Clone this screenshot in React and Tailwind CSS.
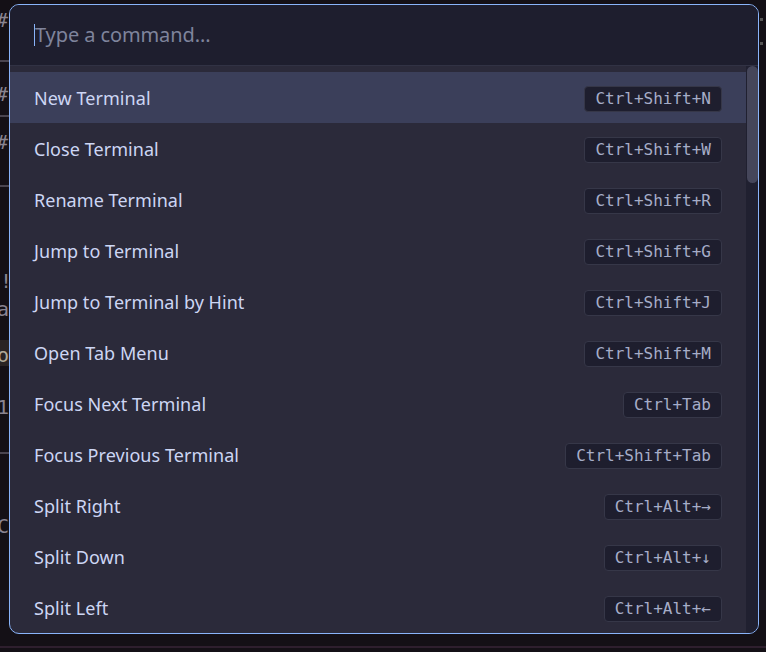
import React from 'react'

const COMMANDS = [
  { label: 'New Terminal', keys: 'Ctrl+Shift+N' },
  { label: 'Close Terminal', keys: 'Ctrl+Shift+W' },
  { label: 'Rename Terminal', keys: 'Ctrl+Shift+R' },
  { label: 'Jump to Terminal', keys: 'Ctrl+Shift+G' },
  { label: 'Jump to Terminal by Hint', keys: 'Ctrl+Shift+J' },
  { label: 'Open Tab Menu', keys: 'Ctrl+Shift+M' },
  { label: 'Focus Next Terminal', keys: 'Ctrl+Tab' },
  { label: 'Focus Previous Terminal', keys: 'Ctrl+Shift+Tab' },
  { label: 'Split Right', keys: 'Ctrl+Alt+→' },
  { label: 'Split Down', keys: 'Ctrl+Alt+↓' },
  { label: 'Split Left', keys: 'Ctrl+Alt+←' },
  { label: 'Split Up', keys: 'Ctrl+Alt+↑' },
]

// fragments of the terminal behind the palette
function Backdrop() {
  return (
    <div className="absolute inset-0 overflow-hidden text-[20px] text-[#8a8490] font-['DejaVu_Sans_Mono',monospace]">
      <span className="absolute left-[-4px] top-[5px]">#</span>
      <span className="absolute left-[-4px] top-[79px]">#</span>
      <span className="absolute left-[-4px] top-[127px]">#</span>
      <div className="absolute left-0 top-[60px] w-[9px] h-[2px] bg-[#4a4550]" />
      <div className="absolute left-0 top-[115px] w-[9px] h-[2px] bg-[#4a4550]" />
      <div className="absolute left-0 top-[185px] w-[9px] h-[2px] bg-[#4a4550]" />
      <span className="absolute left-[0px] top-[266px]">!</span>
      <span className="absolute left-[-3px] top-[294px]">a</span>
      <span className="absolute left-0 top-[340px] w-[9px] h-[26px] bg-[#2a2424]" />
      <span className="absolute left-[-3px] top-[340px] text-[#b0a898]">o</span>
      <span className="absolute left-[-3px] top-[392px]">1</span>
      <div className="absolute left-0 top-[452px] w-[9px] h-[2px] bg-[#4a4550]" />
      <span className="absolute left-[-3px] top-[511px]">C</span>
      <div className="absolute left-0 top-[590px] w-full h-[20px] bg-[#1a1620]" />
      <div className="absolute left-0 top-[646px] w-full h-[2px] bg-[#2e1f2e]" />
      <div className="absolute left-[760px] top-[18px] w-[3px] h-[3px] bg-[#555]" />
      <div className="absolute left-[760px] top-[42px] w-[3px] h-[3px] bg-[#555]" />
    </div>
  )
}

export default function App() {
  return (
    <div className="relative w-[766px] h-[652px] bg-[#141016] overflow-hidden">
      <Backdrop />
      <div className="relative ml-[9px] mt-[4px] w-[750px] h-[630px] flex flex-col rounded-[10px] border border-[#89b4fa] bg-[#2b2a3a] overflow-hidden font-['Noto_Sans',sans-serif]">
        {/* input */}
        <div className="h-[61px] shrink-0 flex items-center pl-[24px] pb-[1px] bg-[#1e1e2e] border-b border-[#313244]">
          <div className="w-[1px] h-[22px] bg-[#89b4fa]" />
          <span className="text-[20px] text-[#7f849c] tracking-[-0.1px]">Type a command...</span>
        </div>

        {/* list + scrollbar */}
        <div className="flex-1 flex min-h-0">
          <div className="flex-1 pt-[6px] overflow-hidden">
            {COMMANDS.map((c, i) => (
              <div
                key={c.label}
                className={`h-[51px] flex items-center justify-between pl-[24px] pr-[24px] pt-[2px] ${i === 0 ? 'bg-[#3b3f5a]' : ''}`}
              >
                <span className="text-[18px] text-[#cdd6f4] tracking-[0.05px]">{c.label}</span>
                <span className="h-[26px] flex items-center px-[10px] rounded-[4px] bg-[#1e1e2e] border border-[#363748] text-[16px] text-[#a6adc8] font-['DejaVu_Sans_Mono',monospace]">
                  {c.keys}
                </span>
              </div>
            ))}
          </div>
          <div className="w-[12px] shrink-0 bg-[#202030] pl-[1px]">
            <div className="w-[11px] h-[117px] rounded-full bg-[#45465a]" />
          </div>
        </div>
      </div>
    </div>
  )
}
